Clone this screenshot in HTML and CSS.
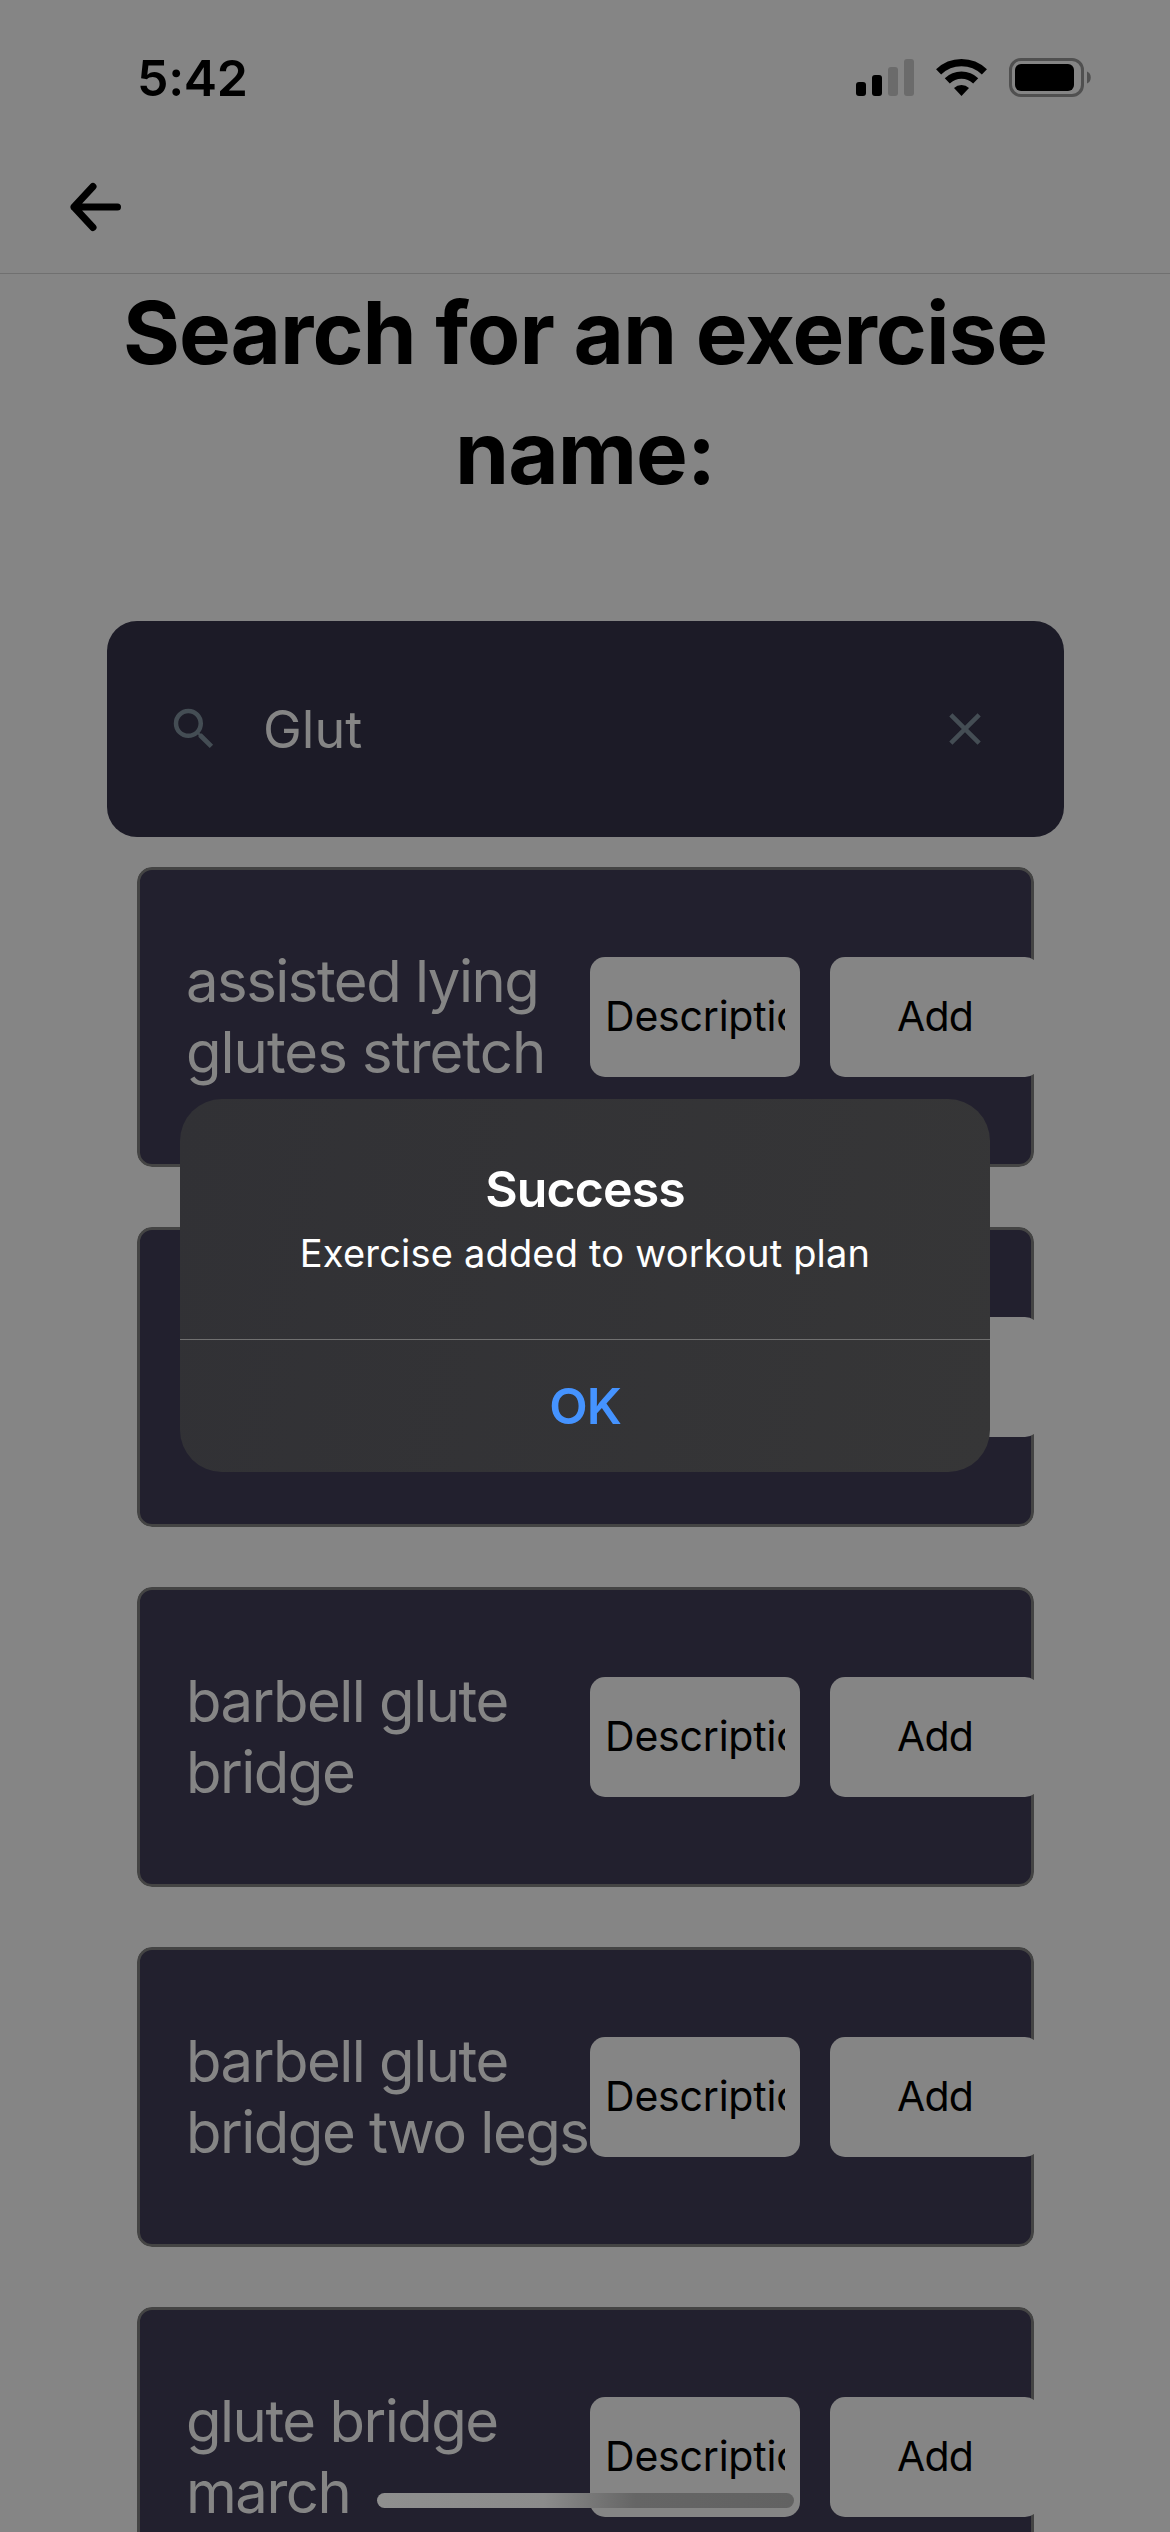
FILE: index.html
```html
<!DOCTYPE html>
<html lang="en">
<head>
<meta charset="utf-8">
<title>Exercise search</title>
<link rel="stylesheet" href="styles.css">
</head>
<body>
<div class="screen">
  <header class="header">
    <div class="status">
      <span class="time">5:42</span>
      <svg width="236" height="40" viewBox="0 0 236 40">
        <rect x="0" y="24" width="10" height="14" rx="3"/>
        <rect x="16" y="17" width="10" height="21" rx="3"/>
        <rect x="32" y="9" width="10" height="29" rx="3" fill="#6b6b6b"/>
        <rect x="48" y="1" width="10" height="37" rx="3" fill="#6b6b6b"/>
        <g fill="none" stroke="#000" stroke-width="7.3">
          <path d="M82.6 13.800A33 33 0 0 1 128.400 13.800"/>
          <path d="M91.300 22.900A20.500 20.500 0 0 1 119.700 22.900"/>
        </g>
        <path d="M98 30A11 11 0 0 1 113 30L105.500 38Z"/>
        <rect x="154.500" y="1.500" width="72" height="36" rx="10.500" fill="none" stroke="#505050" stroke-width="3"/>
        <rect x="159" y="6" width="59" height="27" rx="6"/>
        <path d="M231 13.500c5 1.500 5 10.500 0 12Z" fill="#505050"/>
      </svg>
    </div>
    <svg class="back" width="52" height="50" viewBox="0 0 52 50"><path d="M23 4.500L4 25L23 45.500M4 25H47.500" fill="none" stroke="#000" stroke-width="7" stroke-linecap="round" stroke-linejoin="round"/></svg>
  </header>
  <h1 class="title">Search for an exercise<br>name:</h1>
  <div class="search">
    <svg width="54" height="54" viewBox="0 0 24 24" fill="#444d54"><path d="M15.500 14h-.79l-.28-.27A6.471 6.471 0 0 0 16 9.500 6.500 6.500 0 1 0 9.500 16c1.610 0 3.090-.59 4.230-1.570l.27.28v.79l5 4.990L20.490 19l-4.990-5zm-6 0C7.010 14 5 11.990 5 9.500S7.010 5 9.500 5 14 7.010 14 9.500 11.990 14 9.500 14z"/></svg>
    <span class="query">Glut</span>
    <svg width="54" height="54" viewBox="0 0 24 24" fill="#444d54"><path d="M19 6.410 17.590 5 12 10.590 6.410 5 5 6.410 10.590 12 5 17.590 6.410 19 12 13.410 17.590 19 19 17.590 13.410 12z"/></svg>
  </div>
  <main class="list">
    <section class="card"><p class="name">assisted lying<br><span class="loose">glutes stretch</span></p><div class="btn"><span class="label">Description</span></div><div class="btn add">Add</div></section>
    <section class="card"><p class="name"></p><div class="btn"></div><div class="btn add"></div></section>
    <section class="card"><p class="name">barbell glute<br>bridge</p><div class="btn"><span class="label">Description</span></div><div class="btn add">Add</div></section>
    <section class="card"><p class="name">barbell glute<br>bridge two legs</p><div class="btn"><span class="label">Description</span></div><div class="btn add">Add</div></section>
    <section class="card"><p class="name">glute bridge<br>march</p><div class="btn"><span class="label">Description</span></div><div class="btn add">Add</div></section>
  </main>
  <div class="alert">
    <div class="alert-body"><h2>Success</h2><p>Exercise added to workout plan</p></div>
    <div class="alert-ok">OK</div>
  </div>
  <div class="home"></div>
</div>
</body>
</html>
```
FILE: styles.css
```css
* { box-sizing: border-box; margin: 0; padding: 0; }
body { background: #858585; font-family: Inter, "Liberation Sans", sans-serif; color: #000; }
svg { display: block; flex: none; }
.screen { position: relative; width: 1170px; height: 2532px; overflow: hidden; }
.header { height: 274px; border-bottom: 1px solid #707070; }
.status { display: flex; justify-content: space-between; align-items: flex-start; padding: 58px 78px 0 137px; height: 182px; }
.time { font-size: 50px; font-weight: 600; line-height: 40px; letter-spacing: -0.3px; }
.back { margin-left: 70px; }
.title { margin-top: -1px; text-align: center; font-size: 87px; font-weight: 700; line-height: 120px; height: 348px; letter-spacing: -1px; }
.search { display: flex; align-items: center; width: 957px; height: 216px; margin-left: 107px; padding: 0 72px 0 60px; border-radius: 30px; background: #1c1b27; }
.query { flex: 1; margin-left: 42px; font-size: 52px; color: #858585; }
.list { display: flex; flex-direction: column; gap: 60px; padding: 30px 136px 0 137px; }
.card { display: flex; align-items: center; flex: none; width: 897px; height: 300px; padding-left: 46px; border: 3px solid #444; border-radius: 15px; background: #22202e; clip-path: inset(0 round 15px); }
.name { flex: none; width: 404px; font-size: 58px; line-height: 71.5px; letter-spacing: -1.5px; color: #858585; white-space: nowrap; }
.loose { letter-spacing: -1px; }
.btn { display: flex; align-items: center; justify-content: center; flex: none; width: 210px; height: 120px; padding-bottom: 2px; border-radius: 15px; background: #858585; font-size: 41px; }
.label { width: 180px; overflow: hidden; white-space: nowrap; letter-spacing: -0.2px; }
.add { margin-left: 30px; letter-spacing: -0.8px; }
.alert { position: absolute; left: 180px; top: 1099px; width: 810px; height: 373px; border-radius: 42px; background: linear-gradient(100deg, #313135, #363637); overflow: hidden; color: #fff; text-align: center; }
.alert-body { height: 241px; padding-top: 60px; border-bottom: 1px solid #707070; }
.alert h2 { font-size: 50px; font-weight: 600; line-height: 60px; letter-spacing: -0.9px; }
.alert p { font-size: 38px; line-height: 68px; letter-spacing: 0.19px; }
.alert-ok { font-size: 50px; font-weight: 600; line-height: 133px; letter-spacing: -1px; color: #4593ff; }
.home { position: absolute; left: 377px; top: 2493px; width: 417px; height: 15px; border-radius: 8px; background: linear-gradient(90deg, #8f8f8f 0, #8b8b8b 40%, #656565 62%, #626262 100%); }
```
